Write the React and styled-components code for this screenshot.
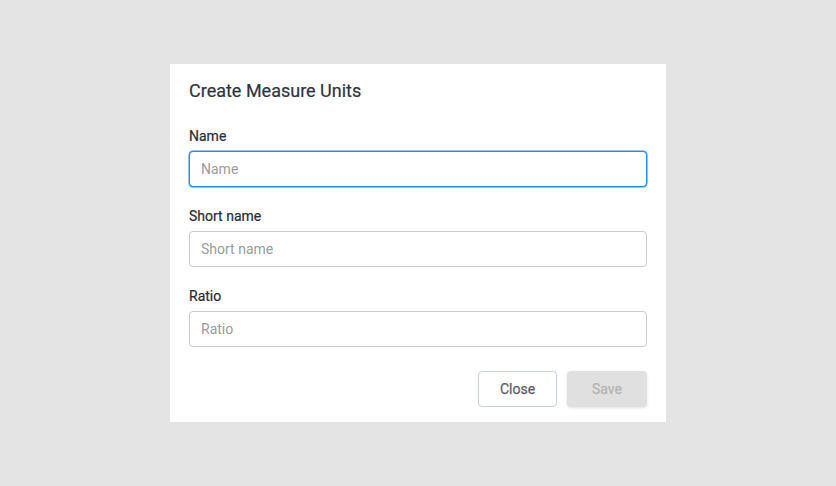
import React from "react";
import styled, { createGlobalStyle } from "styled-components";

const Global = createGlobalStyle`
  html, body { margin: 0; padding: 0; }
  body { background: #e4e4e4; font-family: Roboto, "Liberation Sans", sans-serif; }
  * { box-sizing: border-box; }
`;

const Page = styled.div`
  width: 836px;
  height: 486px;
  display: flex;
  align-items: center;
  justify-content: center;
`;

const Dialog = styled.div`
  width: 496px;
  height: 358px;
  background: #fff;
  padding: 15px 19px 15px 19px;
  display: flex;
  flex-direction: column;
`;

const Title = styled.h2`
  margin: 0 0 23px;
  font-size: 18px;
  line-height: 24px;
  font-weight: 400;
  color: #2e3440;
  -webkit-text-stroke: 0.2px #2e3440;
`;

const Field = styled.div`
  display: flex;
  flex-direction: column;
  margin-bottom: ${(p) => (p.$last ? "24px" : "19px")};
`;

const Label = styled.label`
  font-size: 14px;
  line-height: 20px;
  font-weight: 400;
  color: #262c36;
  -webkit-text-stroke: 0.2px #262c36;
  margin-bottom: 5px;
`;

const Input = styled.input`
  height: 36px;
  width: 100%;
  border: 1px solid ${(p) => (p.$focused ? "#1b8ff0" : "#cbcbcb")};
  border-radius: 4px;
  padding: 0 11px;
  font-family: Roboto, "Liberation Sans", sans-serif;
  font-size: 14px;
  color: #333;
  outline: none;
  box-shadow: ${(p) => (p.$focused ? "0 0 0 0.5px #1b8ff0" : "none")};
  &::placeholder { color: #9b9b9b; }
`;

const Actions = styled.div`
  display: flex;
  justify-content: flex-end;
  gap: 10px;
`;

const Button = styled.button`
  height: 36px;
  width: ${(p) => (p.$primary ? "80px" : "79px")};
  border-radius: 4px;
  font-family: Roboto, "Liberation Sans", sans-serif;
  font-size: 14px;
  font-weight: 400;
  -webkit-text-stroke: 0.25px currentColor;
  cursor: pointer;
  border: ${(p) => (p.$primary ? "none" : "1px solid #c6cfdb")};
  background: ${(p) => (p.$primary ? "#e0e0e0" : "#fff")};
  color: ${(p) => (p.$primary ? "#b3b3b3" : "#575e68")};
  box-shadow: ${(p) => (p.$primary ? "0 1px 3px rgba(0,0,0,0.12)" : "none")};
`;

export default function App() {
  return (
    <>
      <Global />
      <Page>
        <Dialog>
          <Title>Create Measure Units</Title>
          <Field>
            <Label>Name</Label>
            <Input placeholder="Name" $focused />
          </Field>
          <Field>
            <Label>Short name</Label>
            <Input placeholder="Short name" />
          </Field>
          <Field $last>
            <Label>Ratio</Label>
            <Input placeholder="Ratio" />
          </Field>
          <Actions>
            <Button>Close</Button>
            <Button $primary disabled>Save</Button>
          </Actions>
        </Dialog>
      </Page>
    </>
  );
}
